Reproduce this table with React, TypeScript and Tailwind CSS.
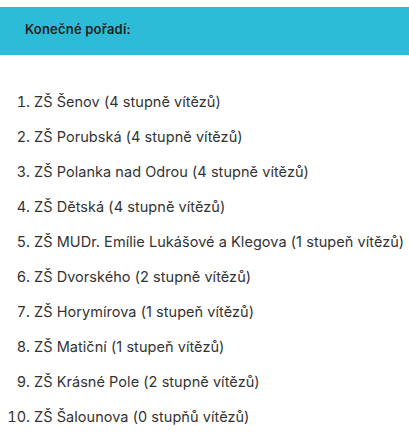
export default function App() {
  const items = [
    "ZŠ Šenov (4 stupně vítězů)",
    "ZŠ Porubská (4 stupně vítězů)",
    "ZŠ Polanka nad Odrou (4 stupně vítězů)",
    "ZŠ Dětská (4 stupně vítězů)",
    "ZŠ MUDr. Emílie Lukášové a Klegova (1 stupeň vítězů)",
    "ZŠ Dvorského (2 stupně vítězů)",
    "ZŠ Horymírova (1 stupeň vítězů)",
    "ZŠ Matiční (1 stupeň vítězů)",
    "ZŠ Krásné Pole (2 stupně vítězů)",
    "ZŠ Šalounova (0 stupňů vítězů)",
  ];
  return (
    <div className="w-[409px] h-[446px] bg-white pt-[7px] overflow-hidden" style={{ fontFamily: "Inter, 'Noto Sans', sans-serif" }}>
      <div className="h-[48px] bg-[#2cbcd8] pl-[25px] flex items-center">
        <span className="text-[13px] tracking-[0.2px] font-semibold text-[#222] pb-[2px]">Konečné pořadí:</span>
      </div>
      <ol className="list-decimal pl-[34px] mt-[29px] text-[14.5px] tracking-[0.05px] text-[#333]">
        {items.map((t) => (
          <li key={t} className="leading-[35px] whitespace-nowrap">{t}</li>
        ))}
      </ol>
    </div>
  );
}
